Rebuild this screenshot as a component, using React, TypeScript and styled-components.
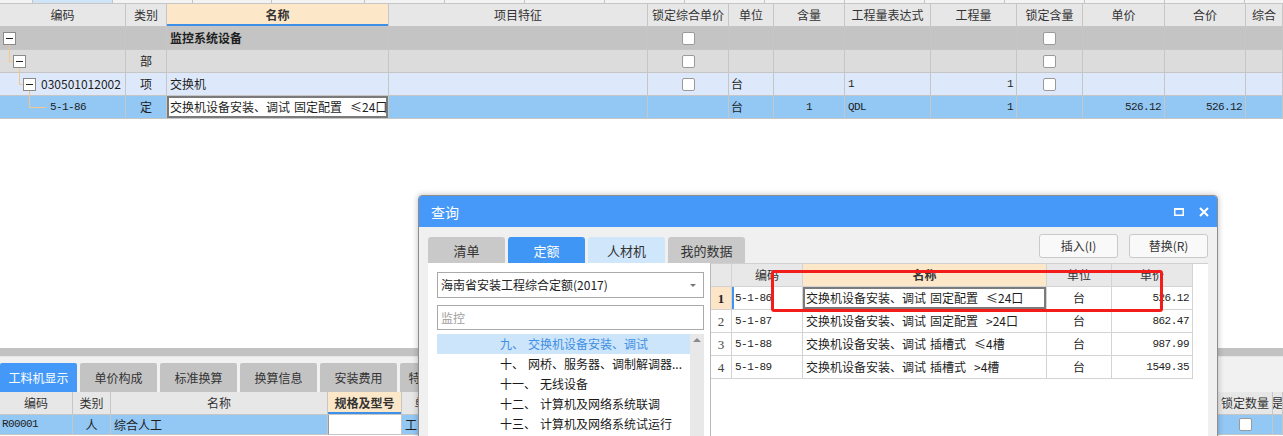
import React from 'react';
import styled, { createGlobalStyle } from 'styled-components';

const CJK = `"Noto Sans CJK SC", "Noto Sans", sans-serif`;
const MONO = `"Liberation Mono", "DejaVu Sans Mono", monospace`;
const SERIF = `"Liberation Serif", "DejaVu Serif", serif`;

const GlobalStyle = createGlobalStyle`
  html, body { margin: 0; padding: 0; background: #fff; }
  body { font-family: ${CJK}; font-size: 12px; color: #222; }
  * { box-sizing: border-box; }
`;

const SP = '\u2004';
const SP2 = '\u2004\u2004';

type Align = 'left' | 'center' | 'right';
const justify = (a?: Align) => (a === 'center' ? 'center' : a === 'right' ? 'flex-end' : 'flex-start');

const Page = styled.div`
  position: relative;
  width: 1283px;
  height: 436px;
  overflow: hidden;
  display: flex;
  flex-direction: column;
  background: #fff;
`;

/* ---------- top strip ---------- */
const TopStrip = styled.div`
  flex: none;
  display: flex;
  height: 3px;
  background: #f3f3f3;
`;
const StripSeg = styled.div<{ $w: number; $active?: boolean }>`
  flex: none;
  width: ${(p) => p.$w}px;
  border-right: 1px solid #c4c4c4;
  background: ${(p) => (p.$active ? '#cfe4f7' : 'transparent')};
`;

/* ---------- main table ---------- */
const MAIN_COLS = '126px 41px 222px 259px 81px 45px 71px 86px 86px 66px 82px 81px 1fr';

const MainTable = styled.div`
  flex: none;
  display: flex;
  flex-direction: column;
`;
const MainBody = styled.div`
  position: relative;
`;
const MainRow = styled.div<{ $bg: string; $header?: boolean }>`
  display: grid;
  grid-template-columns: ${MAIN_COLS};
  height: ${(p) => (p.$header ? 24 : 23)}px;
  background: ${(p) => p.$bg};
  border-top: ${(p) => (p.$header ? '1px solid #c6c6c6' : 'none')};
`;
const Cell = styled.div<{ $align?: Align; $mono?: boolean; $bold?: boolean; $pad?: number }>`
  position: relative;
  display: flex;
  align-items: center;
  justify-content: ${(p) => justify(p.$align)};
  padding: 0 ${(p) => (p.$pad ?? 3)}px;
  border-right: 1px solid #c6c6c6;
  border-bottom: 1px solid #c6c6c6;
  overflow: hidden;
  white-space: nowrap;
  line-height: 1;
  font-family: ${(p) => (p.$mono ? MONO : CJK)};
  font-size: ${(p) => (p.$mono ? '11px' : '12px')};
  letter-spacing: ${(p) => (p.$mono ? '-0.6px' : '0')};
  font-weight: ${(p) => (p.$bold ? 700 : 400)};
  color: #1e1e1e;
`;
const HeadCell = styled(Cell)<{ $accent?: boolean }>`
  justify-content: center;
  color: #333;
  background: ${(p) => (p.$accent ? '#fde7c9' : 'transparent')};
  font-weight: ${(p) => (p.$accent ? 700 : 400)};
  box-shadow: ${(p) => (p.$accent ? 'inset 0 -2px 0 #3d8fe8' : 'none')};
`;
const SelectedCell = styled(Cell)`
  background: #fff;
  box-shadow: inset 0 0 0 2px #7a7a7a;
`;
const TreeCell = styled(Cell)<{ $indent: number }>`
  padding-left: ${(p) => p.$indent}px;
  gap: 5px;
`;
const ExpandBox = styled.span`
  position: relative;
  flex: none;
  width: 13px;
  height: 13px;
  background: #fff;
  border: 1px solid #8a8a8a;
  &::after {
    content: '';
    position: absolute;
    left: 2px;
    top: 5px;
    width: 7px;
    height: 1px;
    background: #222;
  }
`;
const CheckBox = styled.span`
  width: 13px;
  height: 13px;
  background: #fff;
  border: 1px solid #9a9a9a;
  border-radius: 2px;
`;
const TreeLines = styled.svg`
  position: absolute;
  left: 0;
  top: 0;
  pointer-events: none;
`;

const MainFill = styled.div`
  flex: 1;
`;

/* ---------- bottom panel ---------- */
const BottomPanel = styled.div`
  flex: none;
  height: 88px;
  display: flex;
  flex-direction: column;
`;
const SplitBar = styled.div`
  height: 9px;
  background: #c2c2c2;
  border-bottom: 1px solid #e6e6e6;
`;
const BottomTabs = styled.div`
  height: 35px;
  background: #f1f1f1;
  display: flex;
  align-items: flex-end;
  gap: 3px;
`;
const BottomTab = styled.div<{ $active?: boolean }>`
  width: 77px;
  height: 29px;
  display: flex;
  align-items: center;
  justify-content: center;
  font-size: 12px;
  line-height: 1;
  background: ${(p) => (p.$active ? '#4499f8' : '#c3c3c3')};
  color: ${(p) => (p.$active ? '#fff' : '#333')};
  border-radius: 2px 2px 0 0;
`;
const BOTTOM_COLS = '73px 38px 217px 74px 50px 66px 70px 70px 80px 80px 80px 80px 80px 80px 80px 55px 1fr';
const BottomRow = styled.div<{ $bg: string; $h: number }>`
  display: grid;
  grid-template-columns: ${BOTTOM_COLS};
  height: ${(p) => p.$h}px;
  background: ${(p) => p.$bg};
`;
const WhiteCell = styled(Cell)`
  background: #fff;
  border-left: 1px solid #9a9a9a;
`;

/* ---------- dialog ---------- */
const Dialog = styled.div`
  position: absolute;
  left: 418px;
  top: 195px;
  width: 800px;
  height: 262px;
  border: 1px solid #8e8e8e;
  border-radius: 4px 4px 0 0;
  background: #f0f0f0;
  box-shadow: 0 0 6px rgba(0, 0, 0, 0.25);
  display: flex;
  flex-direction: column;
`;
const TitleBar = styled.div`
  flex: none;
  height: 31px;
  background: #4699f9;
  border-radius: 3px 3px 0 0;
  display: flex;
  align-items: center;
  justify-content: space-between;
  padding: 0 8px 0 12px;
  color: #fff;
  font-size: 14px;
`;
const TitleIcons = styled.div`
  display: flex;
  align-items: center;
  gap: 15px;
`;
const DialogBody = styled.div`
  flex: 1;
  display: flex;
  flex-direction: column;
  padding: 7px 9px 0 9px;
`;
const DialogTopRow = styled.div`
  flex: none;
  height: 29px;
  display: flex;
  justify-content: space-between;
`;
const DlgTabs = styled.div`
  align-self: flex-end;
  display: flex;
  gap: 3px;
`;
const DlgTab = styled.div<{ $kind: 'gray' | 'blue' | 'light' }>`
  width: 77px;
  height: 26px;
  display: flex;
  align-items: center;
  justify-content: center;
  font-size: 13px;
  line-height: 1;
  border-radius: 3px 3px 0 0;
  background: ${(p) => (p.$kind === 'blue' ? '#3f96f5' : p.$kind === 'light' ? '#cfe6fb' : '#c9c9c9')};
  color: ${(p) => (p.$kind === 'blue' ? '#fff' : '#333')};
`;
const BtnGroup = styled.div`
  display: flex;
  gap: 11px;
`;
const DlgButton = styled.div`
  width: 79px;
  height: 24px;
  display: flex;
  align-items: center;
  justify-content: center;
  background: #f9f9f9;
  border: 1px solid #c9c9c9;
  border-radius: 3px;
  font-size: 12px;
  line-height: 1;
  color: #333;
`;
const DialogContent = styled.div`
  flex: 1;
  display: grid;
  grid-template-columns: 282px 1fr;
`;
const LeftPanel = styled.div`
  background: #fff;
  padding: 9px 6px 0 9px;
  display: flex;
  flex-direction: column;
`;
const SelectBox = styled.div`
  height: 26px;
  border: 1px solid #a9a9a9;
  display: flex;
  align-items: center;
  justify-content: space-between;
  padding: 0 7px 0 3px;
  font-size: 12px;
  line-height: 1;
  color: #222;
`;
const Caret = styled.span`
  width: 0;
  height: 0;
  border-left: 3px solid transparent;
  border-right: 3px solid transparent;
  border-top: 3px solid #777;
`;
const SearchBox = styled.div`
  margin-top: 7px;
  height: 25px;
  border: 1px solid #a9a9a9;
  display: flex;
  align-items: center;
  padding-left: 3px;
  font-size: 12px;
  line-height: 1;
  color: #a0a0a0;
`;
const ListWrap = styled.div`
  margin-top: 4px;
  flex: 1;
  display: grid;
  grid-template-columns: 1fr 14px;
`;
const ListItems = styled.div`
  display: flex;
  flex-direction: column;
`;
const ListItem = styled.div<{ $selected?: boolean }>`
  height: 20px;
  display: flex;
  align-items: center;
  padding-left: 63px;
  white-space: nowrap;
  font-size: 12px;
  line-height: 1;
  background: ${(p) => (p.$selected ? '#cce5fb' : 'transparent')};
  color: ${(p) => (p.$selected ? '#3f8fe3' : '#1a1a1a')};
`;
const ScrollTrack = styled.div`
  background: #e8e8e8;
  display: flex;
  justify-content: center;
  padding-top: 4px;
`;
const UpArrow = styled.span`
  width: 0;
  height: 0;
  border-left: 4px solid transparent;
  border-right: 4px solid transparent;
  border-bottom: 4px solid #8a8a8a;
`;
const RightPanel = styled.div`
  background: #fff;
  border-left: 1px solid #b9b9b9;
  border-top: 1px solid #d0d0d0;
`;
const Q_COLS = '21px 71px 244px 65px 81px';
const QTable = styled.div`
  width: 482px;
  display: flex;
  flex-direction: column;
`;
const QRow = styled.div<{ $bg?: string }>`
  display: grid;
  grid-template-columns: ${Q_COLS};
  height: 23px;
  background: ${(p) => p.$bg ?? '#fff'};
`;
const QCell = styled.div<{ $align?: Align; $mono?: boolean }>`
  display: flex;
  align-items: center;
  justify-content: ${(p) => justify(p.$align)};
  padding: 0 3px;
  border-right: 1px solid #d3d3d3;
  border-bottom: 1px solid #d3d3d3;
  white-space: nowrap;
  overflow: hidden;
  line-height: 1;
  font-family: ${(p) => (p.$mono ? MONO : CJK)};
  font-size: ${(p) => (p.$mono ? '11px' : '12px')};
  letter-spacing: ${(p) => (p.$mono ? '-0.5px' : '0')};
  color: #1e1e1e;
`;
const QHead = styled(QCell)<{ $accent?: boolean }>`
  justify-content: center;
  color: #333;
  background: ${(p) => (p.$accent ? '#fde7c9' : '#e8e8e8')};
  font-weight: ${(p) => (p.$accent ? 700 : 400)};
`;
const RowNum = styled(QCell)<{ $current?: boolean }>`
  justify-content: center;
  font-family: ${SERIF};
  font-size: 13px;
  font-weight: ${(p) => (p.$current ? 700 : 400)};
  color: ${(p) => (p.$current ? '#222' : '#444')};
  background: ${(p) => (p.$current ? '#fde6c8' : '#fff')};
`;
const CurCodeCell = styled(QCell)`
  box-shadow: inset 2px 0 0 #3f96f5;
`;
const CurNameCell = styled(QCell)`
  box-shadow: inset 0 0 0 2px #7b7b7b;
`;
const Highlight = styled.div`
  position: absolute;
  left: 352px;
  top: 74px;
  width: 392px;
  height: 42px;
  border: 3px solid #f21d1b;
  border-radius: 3px;
  pointer-events: none;
`;

const MaximizeIcon = () => (
  <svg width="10" height="8" viewBox="0 0 10 8">
    <rect x="0.75" y="1" width="8.5" height="6.25" fill="none" stroke="#fff" strokeWidth="1.5" />
    <rect x="0" y="0" width="10" height="2" fill="#fff" />
  </svg>
);
const CloseIcon = () => (
  <svg width="10" height="10" viewBox="0 0 10 10">
    <path d="M1 1 L9 9 M9 1 L1 9" stroke="#fff" strokeWidth="2" />
  </svg>
);

const NAME_86 = `交换机设备安装、调试${SP}固定配置${SP2}≤24口`;

const queryRows = [
  { n: 2, code: '5-1-87', name: `交换机设备安装、调试${SP}固定配置${SP2}>24口`, price: '862.47' },
  { n: 3, code: '5-1-88', name: `交换机设备安装、调试${SP}插槽式${SP2}≤4槽`, price: '987.99' },
  { n: 4, code: '5-1-89', name: `交换机设备安装、调试${SP}插槽式${SP2}>4槽`, price: '1549.35' },
];

const listItems = [
  `十、${SP}网桥、服务器、调制解调器...`,
  `十一、${SP}无线设备`,
  `十二、${SP}计算机及网络系统联调`,
  `十三、${SP}计算机及网络系统试运行`,
];

const stripSegs = [33, 80, 80, 79, 93, 80, 80, 80, 80, 80, 80, 80, 80, 80, 80, 80];
const hiddenCols = 11;

export default function App() {
  return (
    <Page>
      <GlobalStyle />
      <TopStrip>
        {stripSegs.map((w, i) => (
          <StripSeg key={i} $w={w} $active={i === 1} />
        ))}
      </TopStrip>

      <MainTable>
        <MainRow $bg="#e7e7e7" $header>
          <HeadCell>编码</HeadCell>
          <HeadCell>类别</HeadCell>
          <HeadCell $accent>名称</HeadCell>
          <HeadCell>项目特征</HeadCell>
          <HeadCell $pad={1}>锁定综合单价</HeadCell>
          <HeadCell>单位</HeadCell>
          <HeadCell>含量</HeadCell>
          <HeadCell>工程量表达式</HeadCell>
          <HeadCell>工程量</HeadCell>
          <HeadCell>锁定含量</HeadCell>
          <HeadCell>单价</HeadCell>
          <HeadCell>合价</HeadCell>
          <HeadCell $align="left">综合</HeadCell>
        </MainRow>
        <MainBody>
          <MainRow $bg="#c4c4c4">
            <TreeCell $indent={3}>
              <ExpandBox />
            </TreeCell>
            <Cell />
            <Cell $bold>监控系统设备</Cell>
            <Cell />
            <Cell $align="center"><CheckBox /></Cell>
            <Cell />
            <Cell />
            <Cell />
            <Cell />
            <Cell $align="center"><CheckBox /></Cell>
            <Cell />
            <Cell />
            <Cell />
          </MainRow>
          <MainRow $bg="#dcdcdc">
            <TreeCell $indent={13}>
              <ExpandBox />
            </TreeCell>
            <Cell $align="center">部</Cell>
            <Cell />
            <Cell />
            <Cell $align="center"><CheckBox /></Cell>
            <Cell />
            <Cell />
            <Cell />
            <Cell />
            <Cell $align="center"><CheckBox /></Cell>
            <Cell />
            <Cell />
            <Cell />
          </MainRow>
          <MainRow $bg="#dde9fb">
            <TreeCell $indent={23}>
              <ExpandBox />
              <span>030501012002</span>
            </TreeCell>
            <Cell $align="center">项</Cell>
            <Cell>交换机</Cell>
            <Cell />
            <Cell $align="center"><CheckBox /></Cell>
            <Cell $pad={2}>台</Cell>
            <Cell />
            <Cell $mono>1</Cell>
            <Cell $mono $align="right">1</Cell>
            <Cell $align="center"><CheckBox /></Cell>
            <Cell />
            <Cell />
            <Cell />
          </MainRow>
          <MainRow $bg="#93c7f4">
            <TreeCell $indent={50} $mono>5-1-86</TreeCell>
            <Cell $align="center">定</Cell>
            <SelectedCell>{NAME_86}</SelectedCell>
            <Cell />
            <Cell />
            <Cell $pad={2}>台</Cell>
            <Cell $mono $align="center">1</Cell>
            <Cell $mono>QDL</Cell>
            <Cell $mono $align="right">1</Cell>
            <Cell />
            <Cell $mono $align="right">526.12</Cell>
            <Cell $mono $align="right">526.12</Cell>
            <Cell />
          </MainRow>
          <TreeLines width="60" height="92" viewBox="0 0 60 92">
            <path
              d="M9.5 18 V34.5 H13 M19.5 41 V57.5 H23 M29.5 64 V80.5 H46"
              fill="none"
              stroke="#f5c688"
              strokeWidth="1"
            />
          </TreeLines>
        </MainBody>
      </MainTable>

      <MainFill />

      <BottomPanel>
        <SplitBar />
        <BottomTabs>
          <BottomTab $active>工料机显示</BottomTab>
          <BottomTab>单价构成</BottomTab>
          <BottomTab>标准换算</BottomTab>
          <BottomTab>换算信息</BottomTab>
          <BottomTab>安装费用</BottomTab>
          <BottomTab>特征及内容</BottomTab>
        </BottomTabs>
        <BottomRow $bg="#e7e7e7" $h={23}>
          <HeadCell>编码</HeadCell>
          <HeadCell>类别</HeadCell>
          <HeadCell>名称</HeadCell>
          <HeadCell $accent>规格及型号</HeadCell>
          <HeadCell $align="left">单位</HeadCell>
          {Array.from({ length: hiddenCols - 1 }, (_, i) => (
            <HeadCell key={i} />
          ))}
          <HeadCell $pad={0}>锁定数量</HeadCell>
          <HeadCell $align="left">是</HeadCell>
        </BottomRow>
        <BottomRow $bg="#93c7f4" $h={20}>
          <Cell $mono $pad={2}>R00001</Cell>
          <Cell $align="center">人</Cell>
          <Cell>综合人工</Cell>
          <WhiteCell />
          <Cell>工日</Cell>
          {Array.from({ length: hiddenCols - 1 }, (_, i) => (
            <Cell key={i} />
          ))}
          <Cell $align="center"><CheckBox /></Cell>
          <Cell />
        </BottomRow>
      </BottomPanel>

      <Dialog>
        <TitleBar>
          <span>查询</span>
          <TitleIcons>
            <MaximizeIcon />
            <CloseIcon />
          </TitleIcons>
        </TitleBar>
        <DialogBody>
          <DialogTopRow>
            <DlgTabs>
              <DlgTab $kind="gray">清单</DlgTab>
              <DlgTab $kind="blue">定额</DlgTab>
              <DlgTab $kind="light">人材机</DlgTab>
              <DlgTab $kind="gray">我的数据</DlgTab>
            </DlgTabs>
            <BtnGroup>
              <DlgButton>插入(I)</DlgButton>
              <DlgButton>替换(R)</DlgButton>
            </BtnGroup>
          </DialogTopRow>
          <DialogContent>
            <LeftPanel>
              <SelectBox>
                <span>海南省安装工程综合定额(2017)</span>
                <Caret />
              </SelectBox>
              <SearchBox>监控</SearchBox>
              <ListWrap>
                <ListItems>
                  <ListItem $selected>{`九、${SP}交换机设备安装、调试`}</ListItem>
                  {listItems.map((t) => (
                    <ListItem key={t}>{t}</ListItem>
                  ))}
                </ListItems>
                <ScrollTrack>
                  <UpArrow />
                </ScrollTrack>
              </ListWrap>
            </LeftPanel>
            <RightPanel>
              <QTable>
                <QRow>
                  <QHead />
                  <QHead>编码</QHead>
                  <QHead $accent>名称</QHead>
                  <QHead>单位</QHead>
                  <QHead>单价</QHead>
                </QRow>
                <QRow>
                  <RowNum $current>1</RowNum>
                  <CurCodeCell $mono>5-1-86</CurCodeCell>
                  <CurNameCell>{NAME_86}</CurNameCell>
                  <QCell $align="center">台</QCell>
                  <QCell $mono $align="right">526.12</QCell>
                </QRow>
                {queryRows.map((r) => (
                  <QRow key={r.n}>
                    <RowNum>{r.n}</RowNum>
                    <QCell $mono>{r.code}</QCell>
                    <QCell>{r.name}</QCell>
                    <QCell $align="center">台</QCell>
                    <QCell $mono $align="right">{r.price}</QCell>
                  </QRow>
                ))}
              </QTable>
            </RightPanel>
          </DialogContent>
        </DialogBody>
        <Highlight />
      </Dialog>
    </Page>
  );
}
